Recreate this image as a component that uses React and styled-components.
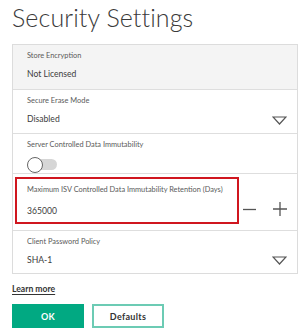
import React from "react";
import styled, { createGlobalStyle } from "styled-components";

const Global = createGlobalStyle`
  html, body { margin: 0; padding: 0; background: #fff; }
  body { font-family: "Lato", "Open Sans", sans-serif; color: #333; }
`;

const Page = styled.div`
  padding: 0 9px 0 12px;
`;

const Title = styled.h1`
  margin: 0;
  padding-top: 1px;
  font-family: "Lato", sans-serif;
  font-weight: 300;
  font-size: 25px;
  line-height: 33px;
  color: #3a3a3a;
  letter-spacing: 0.1px;
`;

const Panel = styled.div`
  margin-top: 10px;
  border: 1px solid #dcdcdc;
`;

const Row = styled.div`
  display: flex;
  align-items: flex-end;
  padding: ${(p) => (p.$inset ? "3px 10px 6px 2px" : "6px 10px 6px 14px")};
  background: ${(p) => (p.$muted ? "#f4f4f4" : "#fff")};
  border-top: ${(p) => (p.$first ? "none" : "1px solid #dedede")};
  height: ${(p) => p.$h}px;
  box-sizing: border-box;
`;

const Field = styled.div`
  flex: 1;
  min-width: 0;
  display: flex;
  flex-direction: column;
  align-self: stretch;
  justify-content: ${(p) => (p.$boxed ? "space-between" : "flex-start")};
  gap: ${(p) => (p.$boxed ? 0 : 7)}px;
  ${(p) =>
    p.$boxed &&
    `border: 2px solid #d0161f; padding: 6px 10px 5px 10px; margin-right: 4px;`}
`;

const Label = styled.div`
  font-size: 7.4px;
  line-height: 10px;
  color: #5a5a5a;
  white-space: nowrap;
`;

const Value = styled.div`
  font-size: 8.6px;
  line-height: 12px;
  color: #3c3c3c;
`;

const Toggle = styled.div`
  position: relative;
  width: 30px;
  height: 15px;
`;

const Track = styled.div`
  position: absolute;
  left: 4px;
  right: 0;
  top: 2px;
  height: 11px;
  border-radius: 6px;
  background: #d6d6d6;
`;

const Knob = styled.div`
  position: absolute;
  left: 0;
  top: 0;
  width: 14px;
  height: 14px;
  border-radius: 50%;
  background: #fff;
  border: 1px solid #666;
`;

const IconBtn = styled.div`
  flex: none;
  width: ${(p) => p.$w}px;
  display: flex;
  justify-content: center;
  align-items: center;
  margin-left: ${(p) => p.$ml || 0}px;
  margin-bottom: ${(p) => p.$mb || 0}px;
`;

const Footer = styled.div`
  padding-top: 10px;
  display: flex;
  flex-direction: column;
  align-items: flex-start;
  gap: 9px;
`;

const Link = styled.a`
  font-size: 8.6px;
  font-weight: 700;
  color: #333;
  text-decoration: underline;
  text-underline-offset: 2px;
  line-height: 11px;
`;

const Buttons = styled.div`
  display: flex;
  gap: 8px;
`;

const Button = styled.button`
  width: 72px;
  height: 24px;
  box-sizing: border-box;
  font-family: "Lato", sans-serif;
  font-weight: 700;
  font-size: 9px;
  letter-spacing: 0.3px;
  border-radius: 0;
  padding: 0;
  cursor: pointer;
  background: ${(p) => (p.$primary ? "#01a982" : "#fff")};
  color: ${(p) => (p.$primary ? "#fff" : "#333")};
  border: 2px solid ${(p) => (p.$primary ? "#01a982" : "#6ccbb4")};
`;

const Caret = () => (
  <svg width="15" height="9" viewBox="0 0 15 9">
    <path d="M1 1 L14 1 L7.5 8 Z" fill="none" stroke="#555" strokeWidth="1.2" />
  </svg>
);

const Minus = () => (
  <svg width="13" height="13" viewBox="0 0 13 13">
    <path d="M0 6.5 H13" stroke="#555" strokeWidth="1.3" />
  </svg>
);

const Plus = () => (
  <svg width="14" height="14" viewBox="0 0 14 14">
    <path d="M0 7 H14 M7 0 V14" stroke="#555" strokeWidth="1.3" />
  </svg>
);

export default function App() {
  return (
    <>
      <Global />
      <Page>
        <Title>Security Settings</Title>
        <Panel>
          <Row $muted $first $h={44}>
            <Field>
              <Label>Store Encryption</Label>
              <Value>Not Licensed</Value>
            </Field>
          </Row>
          <Row $h={44}>
            <Field>
              <Label>Secure Erase Mode</Label>
              <Value>Disabled</Value>
            </Field>
            <IconBtn $w={15} $mb={2}>
              <Caret />
            </IconBtn>
          </Row>
          <Row $h={40}>
            <Field>
              <Label>Server Controlled Data Immutability</Label>
              <Toggle>
                <Track />
                <Knob />
              </Toggle>
            </Field>
          </Row>
          <Row $inset $h={57}>
            <Field $boxed>
              <Label>Maximum ISV Controlled Data Immutability Retention (Days)</Label>
              <Value>365000</Value>
            </Field>
            <IconBtn $w={13} $mb={8}>
              <Minus />
            </IconBtn>
            <IconBtn $w={14} $ml={17} $mb={8}>
              <Plus />
            </IconBtn>
          </Row>
          <Row $h={43}>
            <Field>
              <Label>Client Password Policy</Label>
              <Value>SHA-1</Value>
            </Field>
            <IconBtn $w={15} $mb={2}>
              <Caret />
            </IconBtn>
          </Row>
        </Panel>
        <Footer>
          <Link>Learn more</Link>
          <Buttons>
            <Button $primary>OK</Button>
            <Button>Defaults</Button>
          </Buttons>
        </Footer>
      </Page>
    </>
  );
}
